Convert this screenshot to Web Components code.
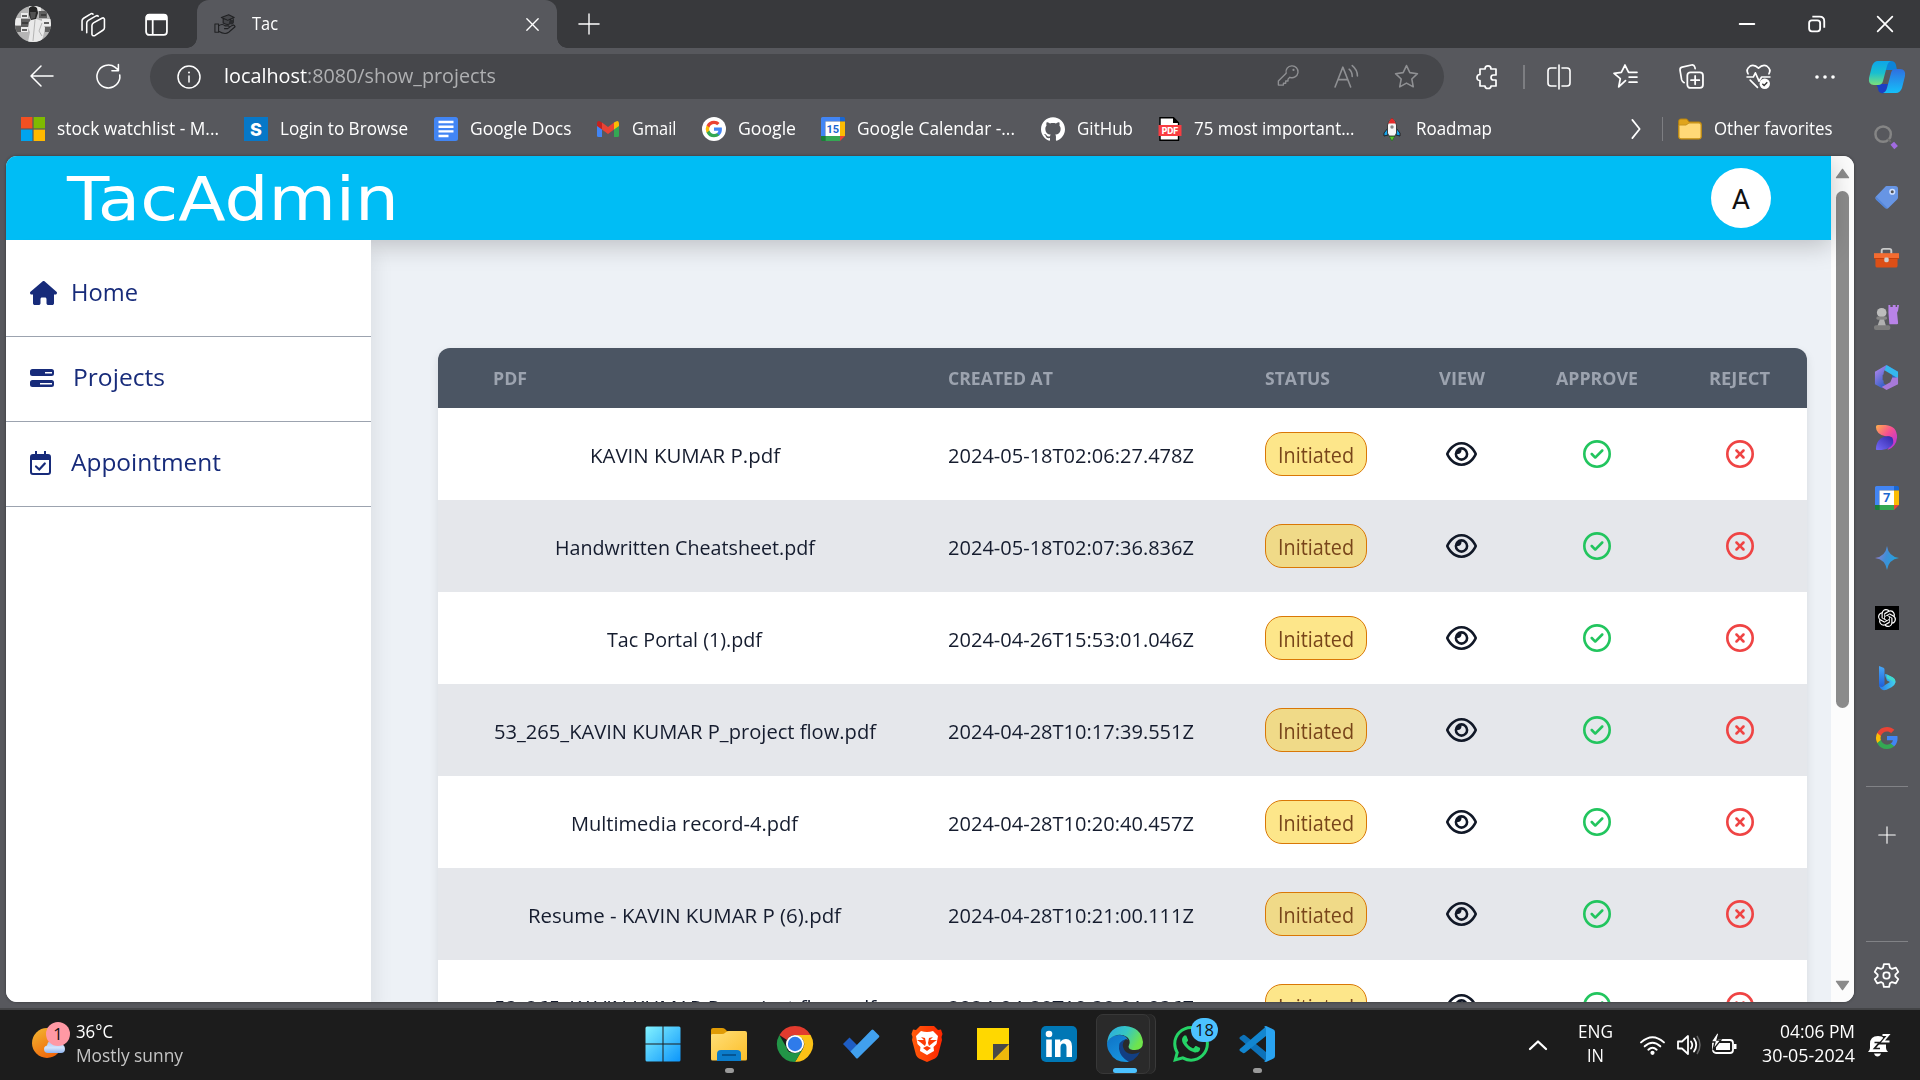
<!DOCTYPE html>
<html lang="en">
<head>
<meta charset="utf-8">
<title>Tac</title>
<style>
html,body{margin:0;height:100%;overflow:hidden;background:#57585d}
body{font-family:"Open Sans","Noto Sans",sans-serif}
</style>
</head>
<body>
<desktop-screen></desktop-screen>
<script>
const st = 'fill="none" stroke="currentColor" stroke-linecap="round" stroke-linejoin="round"';
const G = '<path fill="#4285f4" d="M22.56 12.25c0-.78-.07-1.53-.2-2.25H12v4.26h5.92a5.06 5.06 0 0 1-2.2 3.32v2.77h3.57c2.08-1.92 3.27-4.74 3.27-8.1z"/><path fill="#34a853" d="M12 23c2.97 0 5.46-.98 7.28-2.66l-3.57-2.77c-.98.66-2.23 1.06-3.71 1.06-2.86 0-5.29-1.93-6.16-4.53H2.18v2.84A11 11 0 0 0 12 23z"/><path fill="#fbbc05" d="M5.84 14.09a6.6 6.6 0 0 1 0-4.18V7.07H2.18a11 11 0 0 0 0 9.86z"/><path fill="#ea4335" d="M12 5.38c1.62 0 3.06.56 4.21 1.64l3.15-3.15C17.45 2.09 14.97 1 12 1A11 11 0 0 0 2.18 7.07l3.66 2.84c.87-2.6 3.3-4.53 6.16-4.53z"/>';
const cal = n => `<path fill="#4285f4" d="M0 1.500Q0 0 1.500 0H19V4.500H4.500V19H0z"/><path fill="#1967d2" d="M19 0h3.500Q24 0 24 1.500V4.500H19z"/><path fill="#fbbc04" d="M19 4.500h5V19h-5z"/><path fill="#34a853" d="M4.500 19H19v5H4.500z"/><path fill="#188038" d="M0 19h4.500v5H1.500Q0 24 0 22.500z"/><path fill="#ea4335" d="M19 19h5l-5 5z"/><path fill="#fff" d="M4.500 4.500H19V19H4.500z"/><text x="11.800" y="16" text-anchor="middle" font-family="Roboto,sans-serif" font-weight="700" font-size="${n.length>1?11:13}" fill="#1a66cf">${n}</text>`;
const ICONS = {
 photo:['0 0 36 36','<defs><clipPath id="c"><circle cx="18" cy="18" r="18"/></clipPath></defs><g clip-path="url(#c)"><path fill="#b5b5b5" d="M0 0h36v36H0z"/><path fill="#ececec" d="M0 12h6v7H0zM6 7h7v5H6zM6 21h7v5H6zM27 13h9v7h-9zM14 0h12v5H14z"/><path fill="#606060" d="M6 13h9v8H6zM24 5h8v7h-8zM0 20h6v6H0zM30 21h6v5h-6z"/><path stroke="#333" stroke-width="1.500" d="M7 10h5M7 17h6M7 24h5M26 9h5M29 17h5"/><path fill="#e9e9e9" d="M14 16l5-4 8 3 3 7-2 9-2 5H13l2-10-2-4z"/><path stroke="#b4b4b4" stroke-width="1" d="M20 14l-2 21M27 17l-3 8 3 5" fill="none"/><path fill="#262626" d="M14 2q4-4 8 0l1 5-2 6-5 1-2-5z"/><path fill="#525252" d="M15 6h6l-1 6-4 1z"/></g>'],
 spaces:['0 0 24 24',`<g ${st}><path d="M1 17.500V8.500Q1 7 2.500 6L9 2q1.500-1 2.500 0M5.500 20V10.500q0-1.500 1.500-2.500l7-4q1.500-1 2.500 0M10.500 13q0-1.500 1.500-2.500l8-4.500q2-1 2.500 1v8q0 1.500-1.500 2.500l-7.500 5q-2.500 1-3-1z"/></g>`],
 tabs:['0 0 24 24','<rect x="2" y="2.500" width="20" height="19.500" rx="3" fill="none" stroke="#fff" stroke-width="1.700"/><path d="M2 4.500Q2 2 5 2h14q3 0 3 2.500V8H2zM7.500 8h1.700v14H7.500z" fill="#fff"/>'],
 fav:['0 0 24 24','<g fill="none" stroke="#202123" stroke-width="1.200" stroke-linejoin="round"><path d="M1 12h4v9H1zM5 14q4-3 7 0h4q2 2-1 3h-4M5 20q7 4 11 1l7-6q-1-3-4-1l-4 3"/><path fill="#46474b" d="M8 5l8-3 6 3-7 3zM10 6v5q5 3 8 0V7"/><path d="M21 6v4"/></g><circle cx="19" cy="10" r="2.600" fill="#292a2d"/>'],
 x:['0 0 24 24',`<path ${st} stroke-width="1.900" d="M4 4l16 16M20 4L4 20"/>`],
 plus:['0 0 24 24',`<path ${st} d="M12 1v22M1 12h22"/>`],
 min:['0 0 24 24',`<path ${st} stroke-width="2" d="M4 12h16"/>`],
 restore:['0 0 24 24','<g fill="none" stroke="#fff" stroke-width="2"><rect x="4.500" y="8" width="12" height="12" rx="3"/><path d="M8 4h8q5 0 5 5v7"/></g>'],
 back:['0 0 24 24',`<path ${st} d="M23 12H1M11 2L1 12l10 10"/>`],
 reload:['0 0 24 24',`<path ${st} d="M22.800 10.500A11 11 0 1 1 18.500 3.200L21 5.500M21.500.5v6h-6.200"/>`],
 info:['0 0 24 24',`<circle ${st} cx="12" cy="12" r="11"/><path ${st} d="M12 11v6"/><circle cx="12" cy="7.500" r="1" fill="currentColor"/>`],
 key:['0 0 24 24',`<path ${st} d="M16 2a6.500 6.500 0 1 1-2 12.500l-2 2v2H9.500V21H7v2H1.500v-4.500L10 10A6.500 6.500 0 0 1 16 2z"/><circle cx="18" cy="6.500" r="1.200" fill="currentColor"/>`],
 read:['0 0 24 24',`<path ${st} d="M1 22L8.500 3 16 22M4 15h9M14.500 5q3 2.500 3 7M17.500 1.500q5 4 5 10"/>`],
 star:['0 0 24 24',`<path ${st} d="M12 1.500l3.200 6.800 7.300 1-5.400 5.100 1.400 7.500L12 18.300l-6.500 3.600 1.400-7.500L1.500 9.300l7.300-1z"/>`],
 puzzle:['0 0 24 24',`<path ${st} stroke-width="1.700" d="M4 4h5Q9 .8 12 .8T15 4h5v6h-2.500q-2.500 0-2.500 2.500T17.500 15H20v6h-5q0 2.500-3 2.500T9 21H4v-5.500Q1 15.500 1 12.500T4 9.500z"/>`],
 split:['0 0 24 24',`<path ${st} stroke-width="1.600" d="M9 3H4Q1 3 1 6v12q0 3 3 3h5M15 3h5q3 0 3 3v12q0 3-3 3h-5M12 0v24"/>`],
 favs:['0 0 24 24',`<path ${st} stroke-width="1.700" d="M12 16l-6.500 6 1.500-8L1 9l7-1 3.500-7L15 8h8M15.500 12.500H23M15.500 17.500H23"/>`],
 coll:['0 0 24 24',`<path ${st} stroke-width="1.600" d="M5 18q-2-1-2.500-3L1 6q-.3-2.500 2-3l9-2q2.500-.5 3.200 2l.3 1.500"/><rect ${st} stroke-width="1.700" x="8" y="8" width="15" height="15" rx="3"/><path ${st} stroke-width="1.700" d="M15.500 11.500v8M11.500 15.500h8"/>`],
 heart:['0 0 24 24',`<path ${st} stroke-width="1.600" d="M2 9.500Q-.5 5 4 2q4-2 8 2 4-4 8-2 4.500 3 2 7.500M1 12.500h6l2-4 3.500 8 2.500-4h8M4 15.500l7 7"/><circle cx="18" cy="19" r="5" fill="#fff"/><path d="M15.700 19l1.700 1.700 3-3.200" fill="none" stroke="#333" stroke-width="1.300"/>`],
 dots:['0 0 24 24','<g fill="#fff"><circle cx="4" cy="12" r="1.800"/><circle cx="12" cy="12" r="1.800"/><circle cx="20" cy="12" r="1.800"/></g>'],
 copilot:['0 0 36 32','<defs><linearGradient id="a" x2="0" y2="1"><stop stop-color="#0ea5e9"/><stop offset=".5" stop-color="#19bfd0"/><stop offset="1" stop-color="#7be07b"/></linearGradient><linearGradient id="b" x2="0" y2="1"><stop stop-color="#2f6fe0"/><stop offset="1" stop-color="#14c0fa"/></linearGradient></defs><path fill="#1b3fc4" d="M7 23h12l-2 7q-1 3-5 2-3-1-3-5z"/><path fill="#0d84d8" d="M17 0h5q4 0 5 4l1 5H17z"/><path fill="url(#a)" d="M9 0h13q-3 1-4 5l-4 15q-1 4-5 4H5q-6 0-5-7L3 5q2-5 6-5z"/><path fill="url(#b)" d="M26 8h5q6 0 5 7l-3 12q-2 5-6 5H14q3-1 4-5l4-15q1-4 4-4z"/>'],
 ms:['0 0 24 24','<path fill="#f25022" d="M0 0h11.400v11.400H0z"/><path fill="#7fba00" d="M12.600 0H24v11.400H12.600z"/><path fill="#00a4ef" d="M0 12.600h11.400V24H0z"/><path fill="#ffb900" d="M12.600 12.600H24V24H12.600z"/>'],
 skill:['0 0 24 24','<path fill="#0678c8" d="M0 0h24v24H0z"/><text x="12" y="18.500" text-anchor="middle" font-family="Inter,sans-serif" font-weight="800" font-size="18" fill="#fff">S</text>'],
 docs:['0 0 24 24','<rect width="24" height="24" rx="2.500" fill="#4285f4"/><path stroke="#fff" stroke-width="2.400" d="M4.500 5h15M4.500 9.700h15M4.500 14.400h15M4.500 19h10"/>'],
 gmail:['0 0 24 24','<path fill="#4285f4" d="M1 7l5 3.700V20H2.500Q1 20 1 18.500z"/><path fill="#34a853" d="M23 7l-5 3.700V20h3.500q1.500 0 1.500-1.500z"/><path fill="#fbbc04" d="M18 5.500q5-3.500 5 1V9l-5 3.500z"/><path fill="#c5221f" d="M6 5.500Q1 2 1 6.500V9l5 3.500z"/><path fill="#ea4335" d="M6 5.500l6 4.500 6-4.500v7L12 17l-6-4.500z"/>'],
 google:['0 0 24 24','<circle cx="12" cy="12" r="12" fill="#fff"/><g transform="translate(3 3) scale(.75)">'+G+'</g>'],
 g:['0 0 24 24',G],
 cal15:['0 0 24 24',cal('15')], cal7:['0 0 24 24',cal('7')],
 github:['0 0 24 24','<path fill="#fff" d="M12 .297c-6.630 0-12 5.373-12 12 0 5.303 3.438 9.800 8.205 11.385.6.113.82-.258.82-.577 0-.285-.01-1.040-.015-2.040-3.338.724-4.042-1.610-4.042-1.610C4.422 18.070 3.633 17.700 3.633 17.700c-1.087-.744.084-.729.084-.729 1.205.084 1.838 1.236 1.838 1.236 1.070 1.835 2.809 1.305 3.495.998.108-.776.417-1.305.76-1.605-2.665-.3-5.466-1.332-5.466-5.930 0-1.310.465-2.380 1.235-3.220-.135-.303-.54-1.523.105-3.176 0 0 1.005-.322 3.300 1.230.96-.267 1.980-.399 3-.405 1.020.006 2.040.138 3 .405 2.280-1.552 3.285-1.230 3.285-1.230.645 1.653.24 2.873.12 3.176.765.84 1.230 1.910 1.230 3.220 0 4.610-2.805 5.625-5.475 5.920.42.36.81 1.096.81 2.220 0 1.606-.015 2.896-.015 3.286 0 .315.21.69.825.57C20.565 22.092 24 17.592 24 12.297c0-6.627-5.373-12-12-12"/>'],
 pdf:['0 0 24 24','<path fill="#fff" stroke="#000" stroke-width="1.400" d="M2 .8h13.500l5 5v17.400H2z"/><path fill="#000" d="M15 0l6 6h-6z"/><path fill="#f93d42" d="M.5 8h23v11H.5z"/><text x="12" y="16.700" text-anchor="middle" font-family="Inter,sans-serif" font-weight="800" font-size="8.500" fill="#fff">PDF</text>'],
 rocket:['0 0 24 24','<path fill="#18a2e8" stroke="#111" stroke-width=".8" d="M8 11l-4 5v3l4-1zM16 11l4 5v3l-4-1z"/><path fill="#57c82e" stroke="#1b5e20" stroke-width=".5" d="M9 19h6l-3 5z"/><path fill="#f6f6f6" stroke="#222" stroke-width=".8" d="M7.500 8Q9 3 12 1q3 2 4.500 7v8L15 19H9l-1.500-3z"/><path fill="#e42b2b" d="M8.200 6.500Q9.500 2.500 12 1q2.500 1.500 3.800 5.500z"/><circle cx="12" cy="10" r="1.700" fill="#888"/>'],
 chev:['0 0 24 24',`<path ${st} stroke-width="1.900" d="M8 2l8 10-8 10"/>`],
 folder:['0 0 24 24','<path fill="#e0a51c" stroke="#b7820c" stroke-width="1" d="M.7 20V4Q.7 2 2.700 2h6l2.500 3H21q2.300 0 2.300 2v13q0 2-2 2H2.700q-2 0-2-2z"/><path fill="#ffd977" stroke="#c8941c" stroke-width="1" d="M1 9.500V8h7L11 6h10q2 0 2 2v12q0 1.700-2 1.700H3q-2 0-2-1.700z"/>'],
 search:['0 0 26 26','<circle cx="9.500" cy="9.500" r="8" fill="none" stroke="#858585" stroke-width="2.600"/><path d="M19 19l4 4.500" stroke="#a06be0" stroke-width="5"/><path d="M14.500 14.500l3 3" stroke="#6d6d6d" stroke-width="2"/>'],
 tag:['0 0 26 26','<path fill="#6795e4" d="M13 1h9q3 0 3 3v9q0 1-1 2l-9 9q-1.500 1.500-3 0L2 15q-1.500-1.500 0-3L11.500 2q.7-1 1.500-1z"/><path fill="#5486d9" d="M2 12l12 12-2 .5L2 15z"/><circle cx="19" cy="7" r="2.400" fill="#555" stroke="#cfe0ff" stroke-width="1.600"/>'],
 tools:['0 0 26 26','<path fill="none" stroke="#c9c9c9" stroke-width="2" d="M8 9V6q0-2 2-2h6q2 0 2 2v3"/><rect x="1.500" y="10" width="23" height="13.500" rx="2" fill="#dd4f16"/><path fill="#f36c31" d="M0 8.500h26v5H0z"/><path fill="#c1400d" d="M0 13.500h26v1H0z"/><rect x="10.700" y="13" width="4.600" height="5" rx="1.500" fill="#cfcfcf"/>'],
 chess:['0 0 26 26','<path fill="#b983e8" d="M15 0h2v2h2.500V0h3v2H24V0h2l-1 6-1 2 1 10q.5 2-1 2h-8l-1-12z"/><circle cx="8" cy="8" r="5" fill="#bcbcbc"/><rect x="2.500" y="12" width="11" height="3.400" rx="1.500" fill="#858585"/><path fill="#b0b0b0" d="M6 15h4.500l2 7h-9z"/><rect y="21" width="17" height="5" rx="2" fill="#7c7c7c"/>'],
 m365:['0 0 26 26','<defs><linearGradient id="a" x2=".5" y2="1"><stop stop-color="#c08af0"/><stop offset="1" stop-color="#3a62c8"/></linearGradient></defs><path fill="#2a66c8" d="M13 0l12 7v9l-6 4V10l-9-6z"/><path fill="#35b7ed" d="M13 0l12 7v7l-8-5-7-4z"/><path fill="url(#a)" d="M13 0L10 8v11l3 2-5 3-7-4V7z"/><path fill="#a779d9" d="M25 13v7l-12 6-5-3 9-5 2-5z"/><path fill="#57585d" d="M13 8l4 2.500v5L13 18l-4-2.500v-5z"/>'],
 design:['0 0 26 26','<defs><linearGradient id="a" x2="1" y2="1"><stop stop-color="#ffb14a"/><stop offset=".45" stop-color="#f64f91"/><stop offset="1" stop-color="#a72bf0"/></linearGradient><linearGradient id="b" y1="1" x2="1" y2="0"><stop stop-color="#756af7"/><stop offset="1" stop-color="#3025a8"/></linearGradient></defs><path fill="url(#a)" d="M4 0h8q12 1 12 13-1 10-10 13l4-7 1-4q-1-4-6-3Q2 10 2 2q0-2 2-2z"/><path fill="url(#b)" d="M2 25q0-7 5-11 6-4 12-1 3 6-2 10-4 3-9 3H3q-1 0-1-1z"/>'],
 spark:['0 0 24 24','<defs><linearGradient id="a" x2="1" y2=".3"><stop stop-color="#a978c9"/><stop offset=".55" stop-color="#3f8fd8"/><stop offset="1" stop-color="#22a3dc"/></linearGradient></defs><path fill="url(#a)" d="M12 0q1.500 10.500 12 12-10.500 1.500-12 12Q10.500 13.500 0 12 10.500 10.500 12 0z"/>'],
 gpt:['0 0 24 24','<path fill="#000" d="M0 0h24v24H0z"/><g transform="translate(3 3) scale(.75)"><path fill="#fff" d="M22.282 9.821a5.985 5.985 0 0 0-.516-4.911 6.046 6.046 0 0 0-6.510-2.900A6.065 6.065 0 0 0 4.981 4.182a5.985 5.985 0 0 0-3.998 2.900 6.046 6.046 0 0 0 .743 7.097 5.980 5.980 0 0 0 .511 4.911 6.051 6.051 0 0 0 6.515 2.900A5.985 5.985 0 0 0 13.260 24a6.056 6.056 0 0 0 5.772-4.206 5.989 5.989 0 0 0 3.998-2.900 6.056 6.056 0 0 0-.748-7.073zm-9.022 12.608a4.476 4.476 0 0 1-2.876-1.041l.142-.08 4.778-2.758a.795.795 0 0 0 .393-.681v-6.737l2.020 1.169a.071.071 0 0 1 .038.052v5.583a4.504 4.504 0 0 1-4.495 4.494zm-9.661-4.125a4.471 4.471 0 0 1-.535-3.014l.142.085 4.783 2.758a.771.771 0 0 0 .781 0l5.843-3.369v2.332a.08.08 0 0 1-.033.062L9.740 19.950a4.499 4.499 0 0 1-6.141-1.646zM2.341 7.896a4.485 4.485 0 0 1 2.366-1.973V11.600a.766.766 0 0 0 .388.677l5.814 3.354-2.020 1.169a.076.076 0 0 1-.071 0l-4.830-2.787A4.504 4.504 0 0 1 2.341 7.872zm16.596 3.855L13.104 8.364 15.119 7.200a.076.076 0 0 1 .071 0l4.830 2.791a4.494 4.494 0 0 1-.677 8.104v-5.677a.79.79 0 0 0-.407-.667zm2.011-3.023l-.142-.085-4.774-2.782a.776.776 0 0 0-.785 0L9.409 9.230V6.897a.066.066 0 0 1 .028-.062l4.830-2.787a4.499 4.499 0 0 1 6.680 4.660zM8.307 12.863l-2.020-1.164a.08.08 0 0 1-.038-.057V6.074a4.499 4.499 0 0 1 7.376-3.454l-.142.081L8.704 5.459a.795.795 0 0 0-.393.681zm1.098-2.365l2.602-1.500 2.607 1.500v2.999l-2.597 1.500-2.607-1.500z"/></g>'],
 bing:['0 0 24 24','<defs><linearGradient id="a" x2="0" y2="1"><stop stop-color="#48a8f6"/><stop offset="1" stop-color="#1e5bd8"/></linearGradient><linearGradient id="b" x2="1"><stop stop-color="#2877ec"/><stop offset="1" stop-color="#43d2ee"/></linearGradient></defs><path fill="url(#a)" d="M4 0l4.500 1.700q1 .5 1 2V19L5.500 22Q4 20 4 18z"/><path fill="url(#b)" d="M4 19q2 4 6 0l5-3-3-1.500-2-5q-.5-2 1.500-1.300l6 3q3 1.500 3 5-.5 3-4 5l-5 2.500q-6 2-7.500-4.700z"/><path fill="#3fd9cf" d="M11.500 8.200l6 3q3 1.500 2.800 5.300-2-2-5-2.500L12 12.500z"/>'],
 gear:['0 0 24 24',`<path ${st} stroke-width="1.700" d="M9.500 1h5l.8 3.600 2 1.100L21 4.500l2.300 4-2.800 2.700v1.600l2.800 2.700-2.300 4-3.700-1.200-2 1.100-.8 3.600h-5l-.8-3.600-2-1.100L3 19.500l-2.300-4 2.800-2.700v-1.600L.7 8.500l2.300-4 3.700 1.200 2-1.100z"/><rect ${st} stroke-width="1.700" x="9" y="9" width="6" height="6" rx="2.500"/>`],
 home:['0 0 576 512','<path fill="currentColor" d="M575.800 255.500c0 18-15 32.100-32 32.100h-32l.7 160.200c0 2.700-.2 5.400-.5 8.100V472c0 22.100-17.900 40-40 40H392c-22.100 0-40-17.900-40-40V384c0-17.700-14.300-32-32-32H256c-17.700 0-32 14.300-32 32v88c0 22.100-17.900 40-40 40H104c-22.100 0-40-17.900-40-40V287.600H32c-18 0-32-14-32-32.100c0-9 3-17 10-24L266.400 8c7-7 15-8 22-8s15 2 21 7L564.800 231.500c8 7 12 15 11 24z"/>'],
 server:['0 0 24 24','<path fill="currentColor" fill-rule="evenodd" d="M2.500 3h19Q24 3 24 5.500v2Q24 10 21.500 10h-19Q0 10 0 7.500v-2Q0 3 2.500 3zM15 6v1.500h7V6zM2.500 14h19q2.500 0 2.500 2.500v2q0 2.500-2.500 2.500h-19Q0 21 0 18.500v-2Q0 14 2.500 14zM10 17v1.500h12V17z"/>'],
 calcheck:['0 0 21 24','<path fill="currentColor" fill-rule="evenodd" d="M5 0h2v3h7V0h2v3h2q3 0 3 3v15q0 3-3 3H3q-3 0-3-3V6q0-3 3-3h2zM2 9v12q0 1 1 1h15q1 0 1-1V9z"/><path d="M6 15.500l3.300 3 5.500-6" fill="none" stroke="currentColor" stroke-width="2.200" stroke-linecap="round"/>'],
 eye:['0 0 576 512','<path fill="#111827" d="M288 80c-65.200 0-118.800 29.600-159.900 67.700C89.600 183.500 63 226 49.400 256c13.600 30 40.200 72.500 78.600 108.300C169.200 402.400 222.800 432 288 432s118.800-29.600 159.900-67.700C486.400 328.500 513 286 526.600 256c-13.600-30-40.200-72.500-78.600-108.300C406.800 109.600 353.200 80 288 80zM95.400 112.600C142.500 68.800 207.200 32 288 32s145.500 36.800 192.600 80.600c46.800 43.500 78.100 95.400 93 131.100c3.300 7.900 3.300 16.700 0 24.600c-14.900 35.700-46.200 87.700-93 131.100C433.500 443.200 368.800 480 288 480s-145.500-36.800-192.600-80.600C48.600 356 17.300 304 2.500 268.300c-3.300-7.900-3.300-16.700 0-24.600C17.300 208 48.600 156 95.400 112.600zM288 336c44.200 0 80-35.800 80-80s-35.800-80-80-80c-.7 0-1.300 0-2 0c1.300 5.100 2 10.500 2 16c0 35.300-28.700 64-64 64c-5.500 0-10.900-.7-16-2c0 .7 0 1.300 0 2c0 44.200 35.800 80 80 80zm0-208a128 128 0 1 1 0 256 128 128 0 1 1 0-256z"/>'],
 ok:['0 0 512 512','<path fill="#22c55e" d="M256 48a208 208 0 1 1 0 416 208 208 0 1 1 0-416zm0 464A256 256 0 1 0 256 0a256 256 0 1 0 0 512zM369 209c9.400-9.400 9.400-24.600 0-33.900s-24.600-9.400-33.900 0l-111 111-47-47c-9.400-9.400-24.600-9.400-33.900 0s-9.400 24.600 0 33.900l64 64c9.400 9.400 24.600 9.400 33.900 0L369 209z"/>'],
 no:['0 0 512 512','<path fill="#ef4444" d="M256 48a208 208 0 1 1 0 416 208 208 0 1 1 0-416zm0 464A256 256 0 1 0 256 0a256 256 0 1 0 0 512zM175 175c-9.400 9.400-9.400 24.600 0 33.900l47 47-47 47c-9.400 9.400-9.400 24.600 0 33.900s24.600 9.400 33.900 0l47-47 47 47c9.400 9.400 24.600 9.400 33.900 0s9.400-24.600 0-33.900l-47-47 47-47c9.400-9.400 9.400-24.600 0-33.900s-24.600-9.400-33.900 0l-47 47-47-47c-9.400-9.400-24.600-9.400-33.900 0z"/>'],
 up:['0 0 15 12','<path fill="#8b8b8b" stroke="#8b8b8b" stroke-width="1.500" stroke-linejoin="round" d="M7.500 1.500L14 10.500H1z"/>'],
 weather:['0 0 36 36','<defs><linearGradient id="a" x2=".6" y2="1"><stop stop-color="#f2b832"/><stop offset="1" stop-color="#f0660a"/></linearGradient><linearGradient id="b" x2="0" y2="1"><stop stop-color="#9ec0f5"/><stop offset=".6" stop-color="#d3e4fc"/><stop offset="1" stop-color="#8fb4f0"/></linearGradient></defs><circle cx="15" cy="18" r="15" fill="url(#a)"/><path fill="url(#b)" d="M16 28q-4 0-4-4 0-3 3-3.500Q16 15 21 15q4 0 6 4 6 0 6 5 0 4-4 4z"/>'],
 win:['0 0 36 36','<defs><linearGradient id="a" x2="1" y2="1"><stop stop-color="#85f4ff"/><stop offset="1" stop-color="#0a94fb"/></linearGradient><mask id="m"><path fill="#fff" d="M.5 2Q.5.5 2 .5h15.500v17H.5zM18.500.5H34q1.500 0 1.500 1.500v15.500h-17zM.5 18.500h17v17H2Q.5 35.500.5 34zM18.500 18.500h17V34q0 1.500-1.500 1.500H18.500z"/></mask></defs><path mask="url(#m)" fill="url(#a)" d="M0 0h36v36H0z"/>'],
 files:['0 0 36 36','<defs><linearGradient id="a" x2="1" y2="1"><stop stop-color="#ffdf79"/><stop offset="1" stop-color="#fcbe28"/></linearGradient></defs><path fill="#e09b05" d="M0 4q0-2 2-2h9q2 0 3 1l3 3H0z M0 5h20v8H0z"/><path fill="url(#a)" d="M0 9q0-1 2-1h9q2 0 3.500-1.500T18 5h16q2 0 2 2v26q0 1.500-1.500 1.500h-33Q0 34.500 0 33z"/><path fill="#0b7ccb" d="M6 35v-7q0-4 4-4h16q4 0 4 4v7z"/><path d="M11 29h14" stroke="#054c84" stroke-width="1.600"/>'],
 chrome:['0 0 36 36','<path fill="#e33b2e" d="M2.400 9A18 18 0 0 1 33.600 9H18a9 9 0 0 0-8 5z"/><path fill="#fbc116" d="M33.600 9A18 18 0 0 1 18 36l8-13.500A9 9 0 0 0 25.500 13L18 9z"/><path fill="#229547" d="M2.400 9A18 18 0 0 0 18 36l8-13.500Q22 28 16 27t-6-4.500z"/><circle cx="18" cy="18" r="9" fill="#fff"/><circle cx="18" cy="18" r="7.200" fill="#2f7bea"/>'],
 todo:['0 0 36 36','<path fill="#1e5dc4" d="M0 18l6.500-6.500 12 12L13.500 32z"/><path fill="#41a0ee" d="M7.500 25.500L28.500 4q1-1 2 0L36 9.500q.8.800 0 1.800L15 32q-1 1-2 0z"/>'],
 brave:['0 0 36 36','<defs><linearGradient id="a" x2="1"><stop stop-color="#ff5b0a"/><stop offset="1" stop-color="#ff2600"/></linearGradient></defs><path fill="url(#a)" d="M11 0h14l4 4 3-.5L33.500 8l-1 3 .5 3-4 15q-1 2-3 3.500L18 36l-8-3.500Q8 31 7 29L3 14l.5-3-1-3L4 3.500l3 .5z"/><path fill="#fff" d="M12 5q6 2 12 0l5 5-1.500 8-3 3 .5 4-7 4-7-4 .5-4-3-3L7 10z"/><path fill="#fb3b05" d="M12 11l4 1 1 5-1 3-5-4-3-2 7 0zM24 11l-4 1-1 5 1 3 5-4 3-2-7 0zM14 22l4-2 4 2-4 3z"/>'],
 notes:['0 0 36 36','<path fill="#ffd800" d="M2 2h32v16L18 34H2z"/><path fill="#eeb90b" d="M34 18v16H18z"/><path fill="#484848" d="M18 18h16L18 34z"/>'],
 linkedin:['0 0 36 36','<rect width="36" height="36" rx="5" fill="#0077b5"/><g fill="#fff"><circle cx="8" cy="8" r="3.300"/><path d="M5.200 13.500h5.600V31H5.200zM14 13.500h5.300V16q2-3 5.700-3 6 0 6 7.500V31h-5.500v-9.500q0-4-3-4t-3 4V31H14z"/></g>'],
 edge:['0 0 36 36','<defs><linearGradient id="a" x2="1" y2=".4"><stop stop-color="#2aa7e4"/><stop offset=".55" stop-color="#36c7c2"/><stop offset="1" stop-color="#6fe44c"/></linearGradient><linearGradient id="b" x2=".5" y2="1"><stop stop-color="#0e72c6"/><stop offset="1" stop-color="#1793dd"/></linearGradient></defs><path fill="#123f83" d="M10 18q3-7 9-5-4 3-3 8 2 7 9 7 4 0 8-2-5 10-15 10-8-6-8-18z"/><path fill="url(#b)" d="M0 17q3-8 12-8 7 0 9 5l-2-1q-8 2-7 10t10 13Q8 37 3 27 0 23 0 17z"/><path fill="url(#a)" d="M0 17Q2 0 18 0q16 1 18 16 0 8-8 8-5 0-6-2-1-1 0-3 2-5-2-8-6-4-13-1-5 2-7 7z"/>'],
 wa:['0 0 24 24','<path fill="#25d366" d="M17.472 14.382c-.297-.149-1.758-.867-2.030-.967-.273-.099-.471-.148-.67.15-.197.297-.767.966-.94 1.164-.173.199-.347.223-.644.075-.297-.15-1.255-.463-2.390-1.475-.883-.788-1.480-1.761-1.653-2.059-.173-.297-.018-.458.13-.606.134-.133.298-.347.446-.52.149-.174.198-.298.298-.497.099-.198.05-.371-.025-.52-.075-.149-.669-1.612-.916-2.207-.242-.579-.487-.5-.669-.51-.173-.008-.371-.01-.57-.01-.198 0-.52.074-.792.372-.272.297-1.040 1.016-1.040 2.479 0 1.462 1.065 2.875 1.213 3.074.149.198 2.096 3.200 5.077 4.487.709.306 1.262.489 1.694.625.712.227 1.360.195 1.871.118.571-.085 1.758-.719 2.006-1.413.248-.694.248-1.289.173-1.413-.074-.124-.272-.198-.57-.347m-5.421 7.403h-.004a9.870 9.870 0 0 1-5.031-1.378l-.361-.214-3.741.982.998-3.648-.235-.374a9.860 9.860 0 0 1-1.510-5.260c.001-5.450 4.436-9.884 9.888-9.884 2.640 0 5.122 1.030 6.988 2.898a9.825 9.825 0 0 1 2.893 6.994c-.003 5.450-4.437 9.884-9.885 9.884m8.413-18.297A11.815 11.815 0 0 0 12.050 0C5.495 0 .16 5.335.157 11.892c0 2.096.547 4.142 1.588 5.945L.057 24l6.305-1.654a11.882 11.882 0 0 0 5.683 1.448h.005c6.554 0 11.890-5.335 11.893-11.893a11.821 11.821 0 0 0-3.480-8.413z"/>'],
 code:['0 0 36 36','<path fill="#0d72b9" d="M1 11l3-2q1-.5 2 .3L27 26v9.500L.8 13q-1-1 .2-2z"/><path fill="#1286d0" d="M1 25l3 2q1 .5 2-.3L27 10V.5L.8 23q-1 1 .2 2z"/><path fill="#29a3f1" d="M27 0l7.500 3.500Q36 4.300 36 6v24q0 1.700-1.500 2.500L27 36q-1 0-2-1 2 0 2-2V3q0-2-2-2 1-1 2-1z"/>'],
 caret:['0 0 24 24',`<path ${st} stroke-width="2.300" d="M4 16L12 8.500l8 7.500"/>`],
 wifi:['0 0 24 24',`<path ${st} stroke-width="1.900" d="M1 9q11-10 22 0M4.500 12.800q7.500-7 15 0M8 16q4-3.500 8 0"/><circle cx="12" cy="19" r="2" fill="#fff"/>`],
 vol:['0 0 26 24',`<path ${st} stroke-width="1.800" d="M2 8.500h4L12 3v18l-6-5.500H2zM15 8.500q2.500 3.500 0 7M18 5.500q4.500 6.500 0 13"/><path d="M21 3q6 9 0 18" fill="none" stroke="#666" stroke-width="1.500"/>`],
 batt:['0 0 26 24','<rect x="2" y="7" width="20" height="13" rx="3" fill="none" stroke="#fff" stroke-width="1.800"/><path fill="#fff" d="M5 10h14v7H5zM23 11h2.500v5H23z"/><path fill="#fff" stroke="#1c1c1c" stroke-width="1.300" d="M6 0L0 9h4l-2 8 8-10H6l2-7z"/>'],
 bell:['0 0 24 24','<path fill="#fff" d="M2 19q2-2 2-4v-4q0-8 8-8t8 8v4q0 2 2 4zM8 20.500h7q-1 3-3.500 3T8 20.500z"/><path fill="none" stroke="#1c1c1c" stroke-width="5" d="M17 3h5l-5 6h6"/><path fill="none" stroke="#fff" stroke-width="1.900" d="M16.500 2h6l-5.500 6.500h6.500"/><path fill="none" stroke="#1c1c1c" stroke-width="1.700" d="M8.500 9.500h5l-5 6h5.500"/>']
};

class Base extends HTMLElement {
  constructor(){ super(); this.attachShadow({mode:'open'}); }
  connectedCallback(){ this.shadowRoot.innerHTML = this.html(); }
  a(n,d=''){ return this.getAttribute(n) ?? d; }
}

class UiIcon extends Base {
  html(){
    const [vb,body] = ICONS[this.a('name')], w = this.a('w','24'), h = this.a('h',w);
    return `<style>:host{display:block;flex:none;width:${w}px;height:${h}px}svg{display:block;width:100%;height:100%;overflow:visible}</style><svg viewBox="${vb}" stroke-width="1.500">${body}</svg>`;
  }
}

/* Text set to an exact advance width: the glyphs are condensed or widened to it. */
class FitText extends Base {
  html(){
    return `<style>:host{display:block;flex:none;width:${this.a('w')}px;font-size:${this.a('size','18')}px;line-height:1.36;white-space:pre}
    span{display:inline-block;white-space:pre;transform-origin:0 50%}</style><span><slot></slot></span>`;
  }
  connectedCallback(){
    super.connectedCallback();
    const s = this.shadowRoot.querySelector('span');
    s.style.transform = `scaleX(${this.a('w') / s.getBoundingClientRect().width})`;
  }
}

class BookMark extends Base {
  html(){ return `<style>:host{display:flex;align-items:center;gap:12px;color:#fff}fit-text{margin-top:-1px}</style><ui-icon name="${this.a('icon')}"></ui-icon><fit-text size="17.500" w="${this.a('w')}"><slot></slot></fit-text>`; }
}

class TabStrip extends Base {
  html(){ return `<style>
  :host{display:flex;height:48px;background:#38393c;color:#fff;align-items:center}
  .left{display:flex;align-items:center;width:197px;padding-left:15px;box-sizing:border-box;gap:38px}
  .left ui-icon:first-child{margin-right:-8.500px}
  .tab{position:relative;display:flex;align-items:center;width:360px;height:48px;background:#57585d;border-radius:12px 12px 0 0;box-sizing:border-box;padding:0 16px 0 17px}
  .tab:before,.tab:after{content:"";position:absolute;bottom:0;width:10px;height:10px}
  .tab:before{left:-10px;background:radial-gradient(circle at 0 0,transparent 9.500px,#57585d 10px)}
  .tab:after{right:-10px;background:radial-gradient(circle at 100% 0,transparent 9.500px,#57585d 10px)}
  fit-text{margin-left:16px}.grow{flex:1}
  .add{margin-left:21px}.win{display:flex;gap:47px;margin-right:24px}
  </style>
  <div class="left"><ui-icon name="photo" w="36"></ui-icon><ui-icon name="spaces" w="25"></ui-icon><ui-icon name="tabs" w="25"></ui-icon></div>
  <div class="tab"><ui-icon name="fav" w="22"></ui-icon><fit-text w="26" size="17.500">Tac</fit-text><div class="grow"></div><ui-icon name="x" w="17"></ui-icon></div>
  <ui-icon class="add" name="plus" w="22"></ui-icon><div class="grow"></div>
  <div class="win"><ui-icon name="min" w="22"></ui-icon><ui-icon name="restore" w="22"></ui-icon><ui-icon name="x" w="22"></ui-icon></div>`; }
}

class AddressRow extends Base {
  html(){ return `<style>
  :host{display:flex;height:57px;align-items:center;color:#fff}
  .nav{display:flex;gap:42px;width:150px;padding-left:29.500px;box-sizing:border-box}
  .bar{display:flex;align-items:center;width:1294px;height:45px;border-radius:23px;background:#46474b;box-sizing:border-box;padding:0 25px 0 27px}
  .bar fit-text{color:#fff;margin-top:-1px}.bar .u1{margin-left:22.500px}.bar .u2{color:#afb0b2}.grow{flex:1}
  .acts{display:flex;gap:35px;color:#8f9093}
  .ext{display:flex;align-items:center;margin-left:31.500px;gap:41.600px}
  .sep{width:1.500px;height:24px;background:#7d7e82;margin:0 -19px 0 -18px}
  .cop{margin-left:32.500px}
  </style>
  <div class="nav"><ui-icon name="back"></ui-icon><ui-icon name="reload" w="25"></ui-icon></div>
  <div class="bar"><ui-icon name="info" w="24"></ui-icon><fit-text class="u1" w="83" size="20">localhost</fit-text><fit-text class="u2" w="189" size="20">:8080/show_projects</fit-text><div class="grow"></div>
  <div class="acts"><ui-icon name="key" w="22"></ui-icon><ui-icon name="read" w="25"></ui-icon><ui-icon name="star" w="25"></ui-icon></div></div>
  <div class="ext"><ui-icon name="puzzle"></ui-icon><div class="sep"></div><ui-icon name="split"></ui-icon><ui-icon name="favs" w="25"></ui-icon><ui-icon name="coll" w="25"></ui-icon><ui-icon name="heart" w="25"></ui-icon><ui-icon name="dots"></ui-icon></div>
  <ui-icon class="cop" name="copilot" w="36" h="32"></ui-icon>`; }
}

class BookmarkBar extends Base {
  html(){ return `<style>
  :host{display:flex;align-items:center;height:48px;padding-bottom:3px;color:#fff;padding-left:21px;width:1811px;box-sizing:content-box}
  .l{display:flex;gap:25.300px}.grow{flex:1}.sep{width:1px;height:24px;background:#7d7e82;margin:0 15px 0 15px}
  </style><div class="l">
  <book-mark icon="ms" w="162">stock watchlist - M...</book-mark><book-mark icon="skill" w="128">Login to Browse</book-mark><book-mark icon="docs" w="101.500">Google Docs</book-mark><book-mark icon="gmail" w="44.500">Gmail</book-mark><book-mark icon="google" w="58">Google</book-mark><book-mark icon="cal15" w="158">Google Calendar -...</book-mark><book-mark icon="github" w="56">GitHub</book-mark><book-mark icon="pdf" w="160.500">75 most important...</book-mark><book-mark icon="rocket" w="76">Roadmap</book-mark></div>
  <div class="grow"></div><ui-icon name="chev" w="22"></ui-icon><div class="sep"></div><book-mark icon="folder" w="118.500">Other favorites</book-mark>`; }
}

class SideRail extends Base {
  html(){ return `<style>
  :host{display:flex;flex-direction:column;align-items:center;width:65px;color:#fff}
  .c{height:60px;display:flex;align-items:center}.hr{width:42px;height:1px;background:#818286}
  .p{height:97px;display:flex;align-items:center}.grow{flex:1}.gear{padding-top:21px;height:45px}
  </style>${['search','tag','tools','chess','m365','design','cal7','spark','gpt','bing','g'].map(n=>`<div class="c"><ui-icon name="${n}" w="${['search','tag','tools','chess','m365','design'].includes(n)?25:24}"></ui-icon></div>`).join('')}
  <div class="hr" style="margin-top:18px"></div><div class="p"><ui-icon name="plus" w="18"></ui-icon></div><div class="grow"></div><div class="hr"></div><div class="gear"><ui-icon name="gear" w="25"></ui-icon></div>`; }
}

class NavItem extends Base {
  html(){ return `<style>:host{display:flex;align-items:center;height:85px;box-sizing:border-box;border-bottom:1px solid #9ca3af;padding:0 0 0 24px;color:#172b7a}
  ui-icon{margin-top:-3px}fit-text{margin:-2px 0 0 ${this.a('gap')}px}</style><ui-icon name="${this.a('icon')}" w="${this.a('iw')}" h="24"></ui-icon><fit-text size="23.500" w="${this.a('w')}"><slot></slot></fit-text>`; }
}

class StatusPill extends Base {
  html(){ return `<style>:host{display:flex;align-items:center;justify-content:center;width:102px;height:44px;box-sizing:border-box;border:1.500px solid #d97706;border-radius:17px;background:#fde68a;color:#78451a;padding-top:3px}
  :host([dim]){background:#f0da88}</style><fit-text size="21" w="76"><slot></slot></fit-text>`; }
}

class ProjectRow extends Base {
  html(){
    const f = this.a('file'), dim = this.hasAttribute('dim') ? 'dim' : '';
    return `<style>:host{display:grid;grid-template-columns:383px 246px 102px 45px 82px 62px;column-gap:71.700px;align-items:center;justify-items:center;height:92px;padding-left:55px;background:#fff;color:#151c2e}
    :host([dim]){background:#e5e7eb}fit-text{margin-top:3px}</style>
    <fit-text size="20.800" w="${this.a('w')}">${f}</fit-text><fit-text size="20.800" w="246">${this.a('at')}</fit-text><status-pill ${dim}>Initiated</status-pill><ui-icon name="eye" w="31" h="28"></ui-icon><ui-icon name="ok" w="28"></ui-icon><ui-icon name="no" w="28"></ui-icon>`;
  }
}

class ProjectTable extends Base {
  html(){
    const rows = [['KAVIN KUMAR P.pdf',190,'2024-05-18T02:06:27.478Z'],['Handwritten Cheatsheet.pdf',260,'2024-05-18T02:07:36.836Z'],['Tac Portal (1).pdf',155,'2024-04-26T15:53:01.046Z'],['53_265_KAVIN KUMAR P_project flow.pdf',382,'2024-04-28T10:17:39.551Z'],['Multimedia record-4.pdf',227,'2024-04-28T10:20:40.457Z'],['Resume - KAVIN KUMAR P (6).pdf',313,'2024-04-28T10:21:00.111Z'],['53_265_KAVIN KUMAR P_project flow.pdf',382,'2024-04-28T10:38:01.036Z']];
    return `<style>:host{display:block;width:1369px;border-radius:12px 12px 0 0;box-shadow:0 4px 10px rgba(0,0,0,.1)}
    .h{display:grid;grid-template-columns:383px 246px 102px 45px 82px 62px;column-gap:71.700px;align-items:center;height:60px;padding-left:55px;background:#4b5563;color:#9ca3af;font-weight:700;border-radius:12px 12px 0 0}</style>
    <div class="h">${[['PDF',34],['CREATED AT',105],['STATUS',65],['VIEW',46],['APPROVE',82],['REJECT',61]].map(([t,w])=>`<fit-text size="18" w="${w}">${t}</fit-text>`).join('')}</div>
    ${rows.map(([f,w,d],i)=>`<project-row ${i%2?'dim':''} file="${f}" w="${w}" at="${d}"></project-row>`).join('')}`;
  }
}

class TacAdmin extends Base {
  html(){ return `<style>
  :host{display:flex;width:1848px;height:846px;border-radius:11px;overflow:hidden;background:#edf1f6;box-shadow:0 0 3px rgba(0,0,0,.4)}
  .page{width:1825px;display:flex;flex-direction:column}
  header{position:relative;z-index:2;display:flex;align-items:center;justify-content:space-between;height:84px;flex:none;box-sizing:border-box;padding:0 60px 0 61px;background:#00bdf5;color:#fff;box-shadow:0 5px 24px rgba(0,0,0,.22)}
  .logo{font-family:"DejaVu Sans",sans-serif;margin-top:4px}
  .av{width:60px;height:60px;border-radius:50%;background:#fff;color:#111;display:flex;align-items:center;justify-content:center;font:28px Roboto,sans-serif;padding-top:3px;box-sizing:border-box}
  .body{flex:1;display:flex;min-height:0}
  aside{position:relative;z-index:3;width:365px;background:#fff;padding-top:12px;box-sizing:border-box;box-shadow:5px 14px 18px rgba(0,0,0,.07)}
  main{padding:108px 0 0 67px}
  .sb{width:23px;background:#fcfcfc;display:flex;flex-direction:column;align-items:center;justify-content:space-between}
  .thumb{width:13px;height:517px;border-radius:7px;background:#8b8b8b;margin-top:12px}
  .sb ui-icon:first-child{margin-top:12px}.dn{transform:rotate(180deg);margin:auto 0 11px}
  </style><div class="page"><header><fit-text class="logo" w="332" size="60">TacAdmin</fit-text><div class="av">A</div></header>
  <div class="body"><aside><nav-item icon="home" iw="27" gap="13.500" w="67">Home</nav-item><nav-item icon="server" iw="24" gap="19" w="92">Projects</nav-item><nav-item icon="calcheck" iw="21" gap="20" w="150">Appointment</nav-item></aside><main><project-table></project-table></main></div></div>
  <div class="sb"><ui-icon name="up" w="15" h="11"></ui-icon><div class="thumb"></div><ui-icon class="dn" name="up" w="15" h="11"></ui-icon></div>`; }
}

class TaskApp extends Base {
  html(){ return `<style>:host{position:relative;display:flex;align-items:center;justify-content:center;width:66px;height:70px}
  :host([active]) .bg{position:absolute;left:4px;top:4px;width:52px;height:58px;border-radius:7px;background:#2a2a2a;border:1px solid #383838;box-shadow:5px 0 0 #262626,6px 0 0 #3a3a3a}
  ui-icon{position:relative;margin-top:-2px}
  .run{position:absolute;bottom:7px;width:9px;height:5px;border-radius:3px;background:#9a9a9a}
  :host([active]) .run{width:24px;background:#4cc2ff}
  .badge{position:absolute;left:33px;top:8px;width:27px;height:24px;border-radius:12px;background:#4cc2ff;color:#111;font-size:16.500px;line-height:24px;text-align:center}</style>
  <div class="bg"></div><ui-icon name="${this.a('icon')}" w="36"></ui-icon>${this.hasAttribute('run')?'<div class="run"></div>':''}${this.a('badge')?`<div class="badge">${this.a('badge')}</div>`:''}`; }
}

class TaskBar extends Base {
  html(){ return `<style>
  :host{display:flex;align-items:center;height:72px;box-sizing:border-box;border-top:2px solid #434446;background:#1c1c1c;color:#fff}
  .w{position:relative;display:flex;width:630px;padding-left:32px;box-sizing:border-box;align-items:center;gap:8px}
  .w>ui-icon{margin-top:-5px}
  .b{position:absolute;left:46px;top:-1px;width:24px;height:24px;border-radius:50%;background:#ff99a4;color:#111;font-size:16.500px;line-height:24px;text-align:center}
  .t{display:flex;flex-direction:column}.g{color:#c4c4c4}.apps{display:flex}.grow{flex:1}
  .tray{display:flex;align-items:center;margin-right:30px}
  .r{align-items:flex-end}.m{align-items:center}
  .t{margin-top:-3px}
  </style>
  <div class="w"><ui-icon name="weather" w="36"></ui-icon><div class="b">1</div><div class="t"><fit-text w="37" size="17.500">36°C</fit-text><fit-text class="g" w="107" size="17.500">Mostly sunny</fit-text></div></div>
  <div class="apps"><task-app icon="win"></task-app><task-app icon="files" run></task-app><task-app icon="chrome"></task-app><task-app icon="todo"></task-app><task-app icon="brave"></task-app><task-app icon="notes"></task-app><task-app icon="linkedin"></task-app><task-app icon="edge" active run></task-app><task-app icon="wa" badge="18"></task-app><task-app icon="code" run></task-app></div>
  <div class="grow"></div>
  <div class="tray"><ui-icon name="caret" w="24"></ui-icon><div class="t m" style="margin-left:28px"><fit-text w="35" size="17.500">ENG</fit-text><fit-text w="17" size="17.500">IN</fit-text></div>
  <ui-icon name="wifi" w="25" style="margin-left:27px"></ui-icon><ui-icon name="vol" w="26" h="24" style="margin-left:11px"></ui-icon><ui-icon name="batt" w="26" h="24" style="margin-left:9px"></ui-icon>
  <div class="t r" style="margin-left:25px"><fit-text w="75" size="17.500">04:06 PM</fit-text><fit-text w="93" size="17.500">30-05-2024</fit-text></div><ui-icon name="bell" w="24" style="margin-left:11px"></ui-icon></div>`; }
}

class DesktopScreen extends Base {
  html(){ return `<style>
  :host{display:flex;flex-direction:column;width:1920px;height:1080px;background:#57585d;overflow:hidden}
  .mid{display:flex;flex:1;min-height:0}.left{width:1854px;display:flex;flex-direction:column}
  .left tac-admin{margin-left:6px}side-rail{margin-top:2.500px}
  </style><tab-strip></tab-strip><address-row></address-row><div class="mid"><div class="left"><bookmark-bar></bookmark-bar><tac-admin></tac-admin></div><side-rail></side-rail></div><task-bar></task-bar>`; }
}

for (const [n,c] of Object.entries({'desktop-screen':DesktopScreen,'tab-strip':TabStrip,'address-row':AddressRow,'bookmark-bar':BookmarkBar,'side-rail':SideRail,'tac-admin':TacAdmin,'project-table':ProjectTable,'project-row':ProjectRow,'status-pill':StatusPill,'nav-item':NavItem,'book-mark':BookMark,'task-bar':TaskBar,'task-app':TaskApp,'ui-icon':UiIcon,'fit-text':FitText})) customElements.define(n,c);
</script>
</body>
</html>
